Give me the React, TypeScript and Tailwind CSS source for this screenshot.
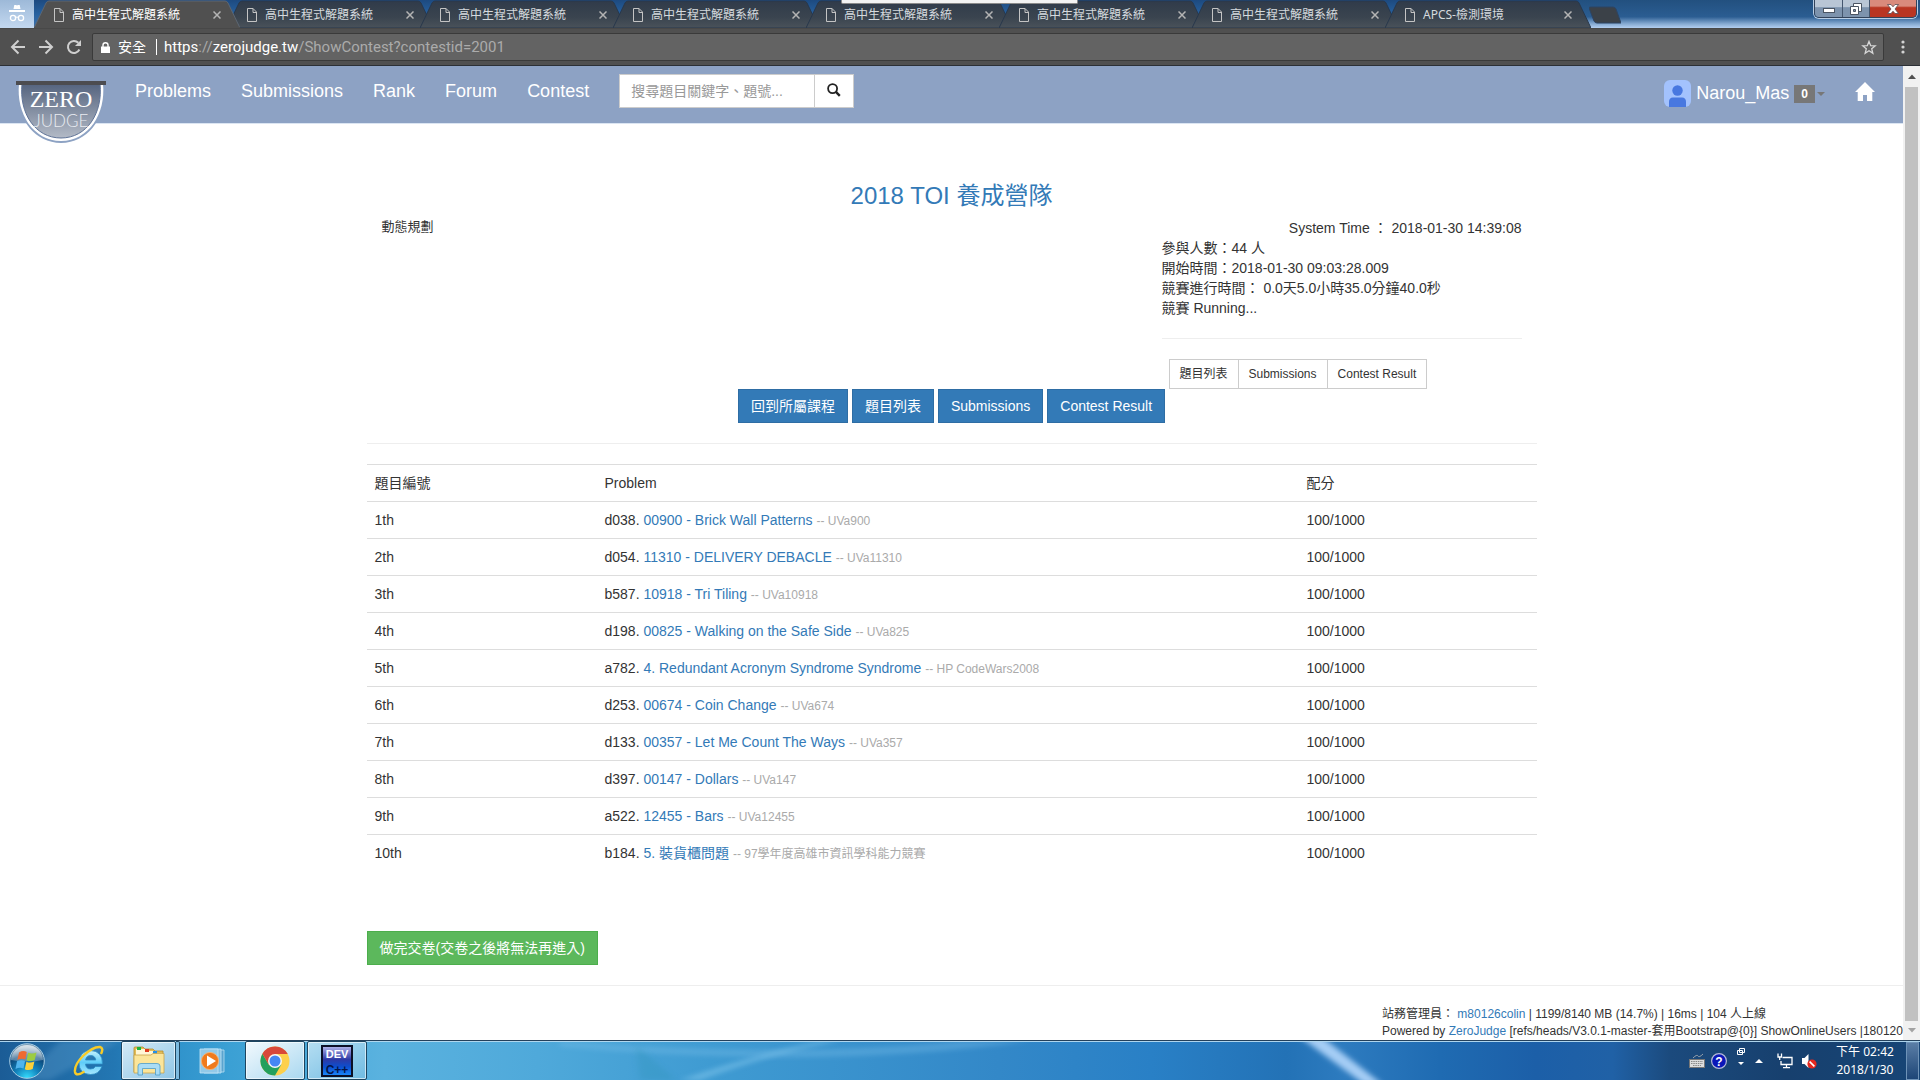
import React from "react";

const tabs = [
  "高中生程式解題系統",
  "高中生程式解題系統",
  "高中生程式解題系統",
  "高中生程式解題系統",
  "高中生程式解題系統",
  "高中生程式解題系統",
  "高中生程式解題系統",
  "APCS-檢測環境",
];

const problems = [
  { id: "d038", title: "00900 - Brick Wall Patterns", source: "UVa900" },
  { id: "d054", title: "11310 - DELIVERY DEBACLE", source: "UVa11310" },
  { id: "b587", title: "10918 - Tri Tiling", source: "UVa10918" },
  { id: "d198", title: "00825 - Walking on the Safe Side", source: "UVa825" },
  { id: "a782", title: "4. Redundant Acronym Syndrome Syndrome", source: "HP CodeWars2008" },
  { id: "d253", title: "00674 - Coin Change", source: "UVa674" },
  { id: "d133", title: "00357 - Let Me Count The Ways", source: "UVa357" },
  { id: "d397", title: "00147 - Dollars", source: "UVa147" },
  { id: "a522", title: "12455 - Bars", source: "UVa12455" },
  { id: "b184", title: "5. 裝貨櫃問題", source: "97學年度高雄市資訊學科能力競賽" },
];

function Tab({ label, active }: { label: string; active: boolean }) {
  return (
    <div
      className={
        "relative flex h-7 w-[206px] shrink-0 items-center pt-0.5 pl-5 pr-[19px] not-first:-ml-[13px] " +
        (active ? "z-10 text-white" : "text-[#d5dade]")
      }
    >
      <svg className="absolute inset-0 h-full w-full" viewBox="0 0 206 28" preserveAspectRatio="none" aria-hidden="true">
        <defs>
          <linearGradient id="tabShade" x1="0" y1="0" x2="0" y2="1">
            <stop offset="0" stopColor="#303b4a" />
            <stop offset="0.6" stopColor="#3a444f" />
            <stop offset="1" stopColor="#4a525a" />
          </linearGradient>
        </defs>
        <path
          d="M0 28 L12 3 Q13 1 15 1 L191 1 Q193 1 194 3 L206 28 Z"
          fill={active ? "#505050" : "url(#tabShade)"}
          stroke={active ? "#5c6673" : "#28384c"}
          strokeWidth="1"
        />
        {active && <path d="M0 28 H206" stroke="#505050" strokeWidth="2" />}
      </svg>
      <button className="relative flex grow items-center gap-2 text-left text-xs">
        <svg className="h-3.5 w-2.5 shrink-0" viewBox="0 0 10 14" fill="none" stroke="#c4c4c4" aria-hidden="true">
          <path d="M0.5 0.5 H6 L9.5 4 V13.5 H0.5 Z M6 0.5 V4.5 H9.5" />
        </svg>
        {label}
      </button>
      <button className="relative" aria-label="關閉分頁">
        <svg className="h-2 w-2" viewBox="0 0 8 8" stroke="#b4b4b4" strokeWidth="1.5" aria-hidden="true">
          <path d="M0.5 0.5 L7.5 7.5 M7.5 0.5 L0.5 7.5" />
        </svg>
      </button>
    </div>
  );
}

function TabStrip() {
  return (
    <div className="relative flex h-7 shrink-0 overflow-hidden bg-gradient-to-b from-[#1d4a80] via-[#27619f] to-[#3d71ab] font-['Noto_Sans','Noto_Sans_CJK_TC',sans-serif]">
      <div className="flex h-full w-[34px] shrink-0 justify-center bg-gradient-to-b from-[#9db9d8] to-[#c3d8f0] pt-1">
        <svg className="h-[18px] w-4" viewBox="0 0 16 18" fill="none" aria-hidden="true">
          <path d="M4.5 5 L5.3 1 H7 L8 1.5 L9 1 H10.7 L11.5 5 Z" fill="#fff" />
          <path d="M0 6 H16 V8 H0 Z" fill="#fff" />
          <circle cx="4" cy="14" r="2.6" stroke="#fff" strokeWidth="1.3" />
          <circle cx="12" cy="14" r="2.6" stroke="#fff" strokeWidth="1.3" />
          <path d="M6.6 13.5 Q8 12.5 9.4 13.5" stroke="#fff" />
        </svg>
      </div>
      <div className="flex">
        {tabs.map((t, i) => (
          <Tab key={i} label={t} active={i === 0} />
        ))}
      </div>
      <div className="-ml-3 flex h-full grow justify-between bg-[linear-gradient(180deg,#22507f_0%,#2b5d92_60%,#86aad2_85%,#b3cff0_100%)]">
        <button className="mt-1.5 ml-2.5 h-[18px] w-8" aria-label="新分頁">
          <svg className="h-full w-full" viewBox="0 0 32 18" aria-hidden="true">
            <path d="M0 2 Q0 1 1.5 1 H24 Q26 1 27 3 L32 17 H8 Q6 17 5 15 Z" fill="#3b4148" stroke="#2d4463" />
          </svg>
        </button>
        <div className="mr-[3px] flex h-[18px] overflow-hidden rounded-b-[5px] border border-t-0 border-[#33435a] shadow-[0_0_0_1px_#b8cde4]">
          <button className="flex w-7 items-center justify-center border-r border-[#44566e] bg-gradient-to-b from-[#b9c6d5] from-40% to-[#7d93ad] to-45%" aria-label="最小化">
            <svg className="mt-1 h-[5px] w-3" viewBox="0 0 12 5" aria-hidden="true">
              <rect x="0.5" y="0.5" width="11" height="4" fill="#fff" stroke="#4b5563" />
            </svg>
          </button>
          <button className="flex w-[27px] items-center justify-center border-r border-[#44566e] bg-gradient-to-b from-[#b9c6d5] from-40% to-[#7d93ad] to-45%" aria-label="還原">
            <svg className="h-3 w-3" viewBox="0 0 12 12" fill="#fff" stroke="#4b5563" aria-hidden="true">
              <path d="M3.5 0.5 H11.5 V8.5 H3.5 Z" />
              <path d="M0.5 3.5 H8.5 V11.5 H0.5 Z" />
              <path d="M3.5 6.5 H5.5 V8.5 H3.5 Z" fill="#8295ad" />
            </svg>
          </button>
          <button className="flex w-[46px] items-center justify-center bg-gradient-to-b from-[#d98a7c] from-35% to-[#b93522] to-45%" aria-label="關閉">
            <svg className="h-2.5 w-3" viewBox="0 0 12 10" aria-hidden="true">
              <path d="M0.5 0.5 H4 L6 2.8 L8 0.5 H11.5 L8 5 L11.5 9.5 H8 L6 7.2 L4 9.5 H0.5 L4 5 Z" fill="#fff" stroke="#5b4a52" strokeWidth="0.8" />
            </svg>
          </button>
        </div>
      </div>
      <div className="absolute top-0 left-[841px] z-20 h-1 w-[237px] rounded-b-xs border border-t-0 border-[#8a8a8a] bg-[#f3f3f3]" />
    </div>
  );
}

function Toolbar() {
  return (
    <div className="flex h-[38px] shrink-0 items-center border-t border-b border-t-[#484848] border-b-[#2c3036] bg-[#505050] pr-3.5 pl-2.5 font-['Noto_Sans','Noto_Sans_CJK_TC',sans-serif]">
      <div className="flex items-center gap-3 pr-2.5 text-[#cfcfcf]">
        <button aria-label="上一頁">
          <svg className="h-4 w-4" viewBox="0 0 16 16" fill="none" stroke="currentColor" strokeWidth="2" aria-hidden="true">
            <path d="M15 8 H2.5 M8.5 1.5 L2 8 L8.5 14.5" />
          </svg>
        </button>
        <button aria-label="下一頁">
          <svg className="h-4 w-4" viewBox="0 0 16 16" fill="none" stroke="currentColor" strokeWidth="2" aria-hidden="true">
            <path d="M1 8 H13.5 M7.5 1.5 L14 8 L7.5 14.5" />
          </svg>
        </button>
        <button aria-label="重新載入">
          <svg className="h-4 w-4" viewBox="0 0 16 16" fill="none" stroke="currentColor" strokeWidth="2" aria-hidden="true">
            <path d="M13.4 10.5 A6 6 0 1 1 12.3 3.8" />
            <path d="M15 1 V7 H9 Z" fill="currentColor" stroke="none" />
          </svg>
        </button>
      </div>
      <div className="flex h-7 grow items-center rounded-xs border border-[#3a3a3a] bg-[#636363] pr-1.5 pl-2">
        <svg className="h-[11px] w-[9px]" viewBox="0 0 9 11" aria-hidden="true">
          <path d="M0 4.5 H9 V11 H0 Z" fill="#fff" />
          <path d="M2 5 V3 Q2 0.8 4.5 0.8 Q7 0.8 7 3 V5" fill="none" stroke="#fff" strokeWidth="1.4" />
        </svg>
        <span className="ml-2 text-sm text-white">安全</span>
        <span className="mr-[7px] ml-2.5 h-4 w-px bg-white" />
        <div className="grow font-[Roboto,sans-serif] text-[15px] whitespace-nowrap text-[#ababab]">
          <span className="text-white">https</span>://<span className="text-white">zerojudge.tw</span>/ShowContest?contestid=2001
        </div>
        <button aria-label="加入書籤">
          <svg className="h-[15px] w-4" viewBox="0 0 16 16" fill="none" stroke="#d8d8d8" strokeWidth="1.4" aria-hidden="true">
            <path d="M8 1.5 L9.8 6 L14.6 6.3 L10.9 9.4 L12.1 14.2 L8 11.5 L3.9 14.2 L5.1 9.4 L1.4 6.3 L6.2 6 Z" />
          </svg>
        </button>
      </div>
      <button className="ml-4" aria-label="選單">
        <svg className="h-3.5 w-1.5" viewBox="0 0 6 14" fill="#d4d4d4" aria-hidden="true">
          <circle cx="3" cy="2" r="1.6" />
          <circle cx="3" cy="7" r="1.6" />
          <circle cx="3" cy="12" r="1.6" />
        </svg>
      </button>
    </div>
  );
}

function Logo() {
  return (
    <svg className="h-[62px] w-[90px]" viewBox="0 0 90 62" role="img" aria-label="ZeroJudge">
      <defs>
        <linearGradient id="shield" x1="0" y1="0" x2="0" y2="1">
          <stop offset="0" stopColor="#55647f" />
          <stop offset="1" stopColor="#b3bac6" />
        </linearGradient>
      </defs>
      <path d="M2 3 C-2 33 16 62 45 62 C74 62 92 33 88 3 Z" fill="#8da2c3" />
      <path d="M3 3 C0 32 17 60 45 60 C73 60 90 32 87 3 Z" fill="#fff" />
      <path d="M6 3 C3 32 19 57 45 57 C71 57 87 32 84 3 Z" fill="url(#shield)" stroke="#5f7397" strokeWidth="1" />
      <rect x="0" y="0" width="90" height="4" fill="#4c4c50" />
      <text x="45" y="26" textAnchor="middle" fontSize="24" fill="#fff" fontFamily="Liberation Serif, serif">ZERO</text>
      <text x="45" y="46" textAnchor="middle" fontSize="17" fontWeight="300" fill="#e9ecf1" fontFamily="Lato, sans-serif">JUDGE</text>
    </svg>
  );
}

function NavBar() {
  return (
    <nav className="flex h-[58px] items-start border-b border-[#dbe5f2] bg-[#8da2c4] pl-4 text-lg leading-5 text-white">
      <a href="#" className="z-10 mt-[15px] mr-3.5 h-[62px] shrink-0">
        <Logo />
      </a>
      <div className="flex pt-[15px]">
        {["Problems", "Submissions", "Rank", "Forum", "Contest"].map((l) => (
          <a key={l} href="#" className="px-[15px]">
            {l}
          </a>
        ))}
      </div>
      <form className="mt-2 ml-[15px] flex">
        <input
          aria-label="搜尋"
          placeholder="搜尋題目關鍵字、題號..."
          className="h-[34px] w-[196px] border border-[#ccc] bg-white px-[11px] text-sm text-[#555] placeholder:text-[#999]"
        />
        <button type="button" aria-label="搜尋" className="-ml-px flex h-[34px] w-10 items-center justify-center border border-[#ccc] bg-white pb-0.5">
          <svg className="h-3.5 w-3.5" viewBox="0 0 14 14" fill="none" stroke="#222" aria-hidden="true">
            <circle cx="5.6" cy="5.6" r="4.5" strokeWidth="1.8" />
            <path d="M8.9 8.9 L12.8 12.8" strokeWidth="2.4" />
          </svg>
        </button>
      </form>
      <div className="mr-7 ml-auto flex items-start pt-3.5">
        <a href="#" className="flex items-center">
          <svg className="h-[27px] w-[27px]" viewBox="0 0 27 27" aria-hidden="true">
            <rect width="27" height="27" rx="6" fill="#a3c2fd" />
            <circle cx="13.5" cy="10.5" r="5.2" fill="#4878e0" />
            <path d="M5 27 V22 Q5 17.5 9 17.5 H18 Q22 17.5 22 22 V27 Z" fill="#4878e0" />
          </svg>
          <span className="ml-[5px] pb-0.5">Narou_Mas</span>
          <span className="ml-[5px] bg-[#777] px-[7px] text-xs leading-[18px] font-bold">0</span>
          <svg className="ml-0.5 h-1 w-2" viewBox="0 0 8 4" fill="#777" aria-hidden="true">
            <path d="M0 0 H8 L4 4 Z" />
          </svg>
        </a>
        <a href="#" aria-label="首頁" className="mt-0.5 ml-[30px]">
          <svg className="h-[19px] w-5" viewBox="0 0 20 19" fill="#fff" aria-hidden="true">
            <path d="M10 0 L20 10 H17.3 V19 H12 V13 H8 V19 H2.7 V10 H0 Z" />
          </svg>
        </a>
      </div>
    </nav>
  );
}

function Contest() {
  const small = "-ml-px border border-[#ccc] bg-white px-2.5 py-[5px] text-xs leading-[18px] first:ml-0";
  const blue = "border border-[#2e6da4] bg-[#337ab7] px-3 py-1.5 text-white";
  const cell = "border-t border-[#ddd] p-2 text-left font-normal";
  return (
    <main className="mx-auto max-w-[1170px] pt-[59px]">
      <h3 className="mb-[9px] text-center text-2xl leading-[26px] text-[#337ab7]">
        <a href="#">2018 TOI 養成營隊</a>
      </h3>
      <div className="flex justify-between px-[15px]">
        <p className="text-[13px] leading-[18px]">動態規劃</p>
        <div className="w-[360px]">
          <p className="text-right">System Time ： 2018-01-30 14:39:08</p>
          <p>參與人數：44 人</p>
          <p>開始時間：2018-01-30 09:03:28.009</p>
          <p>競賽進行時間： 0.0天5.0小時35.0分鐘40.0秒</p>
          <p>競賽 Running...</p>
          <hr className="my-5 border-[#eee]" />
          <div className="flex pl-[7px]">
            <button className={small}>題目列表</button>
            <button className={small}>Submissions</button>
            <button className={small}>Contest Result</button>
          </div>
        </div>
      </div>
      <div className="flex justify-center gap-1">
        <button className={blue}>回到所屬課程</button>
        <button className={blue}>題目列表</button>
        <button className={blue}>Submissions</button>
        <button className={blue}>Contest Result</button>
      </div>
      <hr className="my-5 border-[#eee]" />
      <table className="w-full table-fixed border-collapse">
        <colgroup>
          <col className="w-[230px]" />
          <col />
          <col className="w-[238px]" />
        </colgroup>
        <thead>
          <tr>
            <th className={cell}>題目編號</th>
            <th className={cell}>Problem</th>
            <th className={cell}>配分</th>
          </tr>
        </thead>
        <tbody>
          {problems.map((p, i) => (
            <tr key={p.id}>
              <td className={cell}>{i + 1}th</td>
              <td className={cell}>
                {p.id}.{" "}
                <a href="#" className="text-[#337ab7]">
                  {p.title}
                </a>{" "}
                <span className="text-xs text-[#aaa]">-- {p.source}</span>
              </td>
              <td className={cell}>100/1000</td>
            </tr>
          ))}
        </tbody>
      </table>
      <button className="mt-[60px] border border-[#4cae4c] bg-[#5cb85c] px-3 py-1.5 text-white">做完交卷(交卷之後將無法再進入)</button>
    </main>
  );
}

function Footer() {
  return (
    <footer className="mt-5 border-t border-[#eee] pt-5">
      <div className="ml-auto w-[521px] overflow-hidden text-xs leading-[17px] whitespace-nowrap">
        <p>
          站務管理員：{" "}
          <a href="#" className="text-[#337ab7]">
            m80126colin
          </a>{" "}
          | 1199/8140 MB (14.7%) | 16ms | 104 人上線
        </p>
        <p>
          Powered by{" "}
          <a href="#" className="text-[#337ab7]">
            ZeroJudge
          </a>{" "}
          [refs/heads/V3.0.1-master-套用Bootstrap@&#123;0&#125;] ShowOnlineUsers |180120
        </p>
      </div>
    </footer>
  );
}

function Scrollbar() {
  return (
    <div className="flex w-[17px] shrink-0 flex-col items-center bg-[#f1f1f1]" aria-hidden="true">
      <svg className="my-2 h-[5px] w-2" viewBox="0 0 8 5" fill="#505050">
        <path d="M0 5 L4 0.5 L8 5 Z" />
      </svg>
      <div className="w-[13px] grow bg-[#c1c1c1]" />
      <svg className="my-[7px] h-[5px] w-2" viewBox="0 0 8 5" fill="#a3a3a3">
        <path d="M0 0 L4 4.5 L8 0 Z" />
      </svg>
    </div>
  );
}

function StartIcon() {
  return (
    <svg className="h-9 w-9" viewBox="0 0 36 36" aria-hidden="true">
      <defs>
        <radialGradient id="orb" cx="0.5" cy="1" r="0.9">
          <stop offset="0" stopColor="#35e0ff" />
          <stop offset="0.4" stopColor="#1283bd" />
          <stop offset="0.75" stopColor="#0c4a7d" />
          <stop offset="1" stopColor="#6f93ad" />
        </radialGradient>
        <linearGradient id="gloss" x1="0" y1="0" x2="0" y2="1">
          <stop offset="0" stopColor="#fff" stopOpacity="0.75" />
          <stop offset="1" stopColor="#fff" stopOpacity="0.25" />
        </linearGradient>
      </defs>
      <circle cx="18" cy="18" r="17.3" fill="url(#orb)" stroke="#a7cde4" strokeWidth="1" />
      <path d="M2 17 A16 15 0 0 1 34 17 Q18 20 2 17 Z" fill="url(#gloss)" />
      <path d="M10 9.5 Q14 7 17.8 9 L16.3 16.5 Q12.5 14.8 8.3 17 Z" fill="#ee6a31" />
      <path d="M19.2 9.7 Q23 11.5 27.5 9.4 L25.7 17 Q21.5 19 17.6 17.2 Z" fill="#9ccc42" />
      <path d="M8 18.3 Q12 16.3 16 18 L14.5 25.5 Q10.5 24 6.5 26 Z" fill="#4fb4ee" />
      <path d="M17.4 18.7 Q21 20.5 25.4 18.5 L23.7 26 Q19.5 28 15.8 26.2 Z" fill="#fbd03a" />
    </svg>
  );
}

function IeIcon() {
  return (
    <svg className="h-8 w-8" viewBox="0 0 32 32" fill="none" aria-hidden="true">
      <defs>
        <linearGradient id="ie" x1="0" y1="0" x2="0" y2="1">
          <stop offset="0" stopColor="#c5f2ff" />
          <stop offset="0.5" stopColor="#5fcdf8" />
          <stop offset="1" stopColor="#a5e7ff" />
        </linearGradient>
      </defs>
      <path
        d="M29.5 19 H12.5 Q13 24 17.5 24 Q21 24 22.5 21.5 H29 Q26 29.5 17.5 29.5 Q6 29 6 17.5 Q6.5 6 17.5 5.5 Q29.5 6 29.5 19 Z M12.6 15 H22.8 Q22 10.5 17.7 10.5 Q13.3 10.5 12.6 15 Z"
        fill="url(#ie)"
        fillRule="evenodd"
        stroke="#2b8cc4"
        strokeWidth="0.8"
      />
      <path d="M11.5 26.5 Q3 32 2 27 Q1 20 10 11 Q20 1.5 27 2 Q31 3 28 9" stroke="#f7cb28" strokeWidth="2.4" />
    </svg>
  );
}

function ExplorerIcon() {
  return (
    <svg className="h-[30px] w-8" viewBox="0 0 32 30" aria-hidden="true">
      <path d="M1 2 Q1 1 2 1 H10 L12 3 H20 L22 5 H30 V26 H1 Z" fill="#e3bd57" stroke="#b58d2f" strokeWidth="0.8" />
      <path d="M3 3 H12 L14 5 H21 L23 7 H29 V10 H3 Z" fill="#fff6d5" />
      <path d="M4 1 H8 V4 H4 Z" fill="#1db53a" />
      <path d="M12 3 H16 V6 H12 Z" fill="#df3a1e" />
      <path d="M20 5 H24 V8 H20 Z" fill="#2390e8" />
      <path d="M1 9 H18 L20 7.5 H31 V27 H1 Z" fill="#fbe59a" stroke="#c9a349" strokeWidth="0.8" />
      <path d="M5 29 V20 Q5 17.5 8 17.5 H24 Q27 17.5 27 20 V29 H22.5 V22.5 H9.5 V29 Z" fill="#a9dcf5" stroke="#4c9cc8" strokeWidth="0.8" />
    </svg>
  );
}

function MediaIcon() {
  return (
    <svg className="h-7 w-7" viewBox="0 0 28 28" aria-hidden="true">
      <path d="M9 3 H25 V25 H9 Z" fill="#5aa4cf" stroke="#b8e0f4" strokeWidth="0.8" />
      <path d="M5 2 H22 V26 H5 Z" fill="#7fbee2" stroke="#c4e6f7" strokeWidth="0.8" />
      <path d="M1 2 H19 V26 H1 Z" fill="#92c9e8" stroke="#c4e6f7" strokeWidth="0.8" />
      <circle cx="11" cy="14" r="8.6" fill="#ef7a1d" stroke="#ffb36b" strokeWidth="0.8" />
      <path d="M8 8.5 L17 14 L8 19.5 Z" fill="#fff" />
    </svg>
  );
}

function ChromeIcon() {
  return (
    <svg className="h-[30px] w-[30px]" viewBox="0 0 30 30" aria-hidden="true">
      <circle cx="15" cy="15" r="14.5" fill="#fdd04c" />
      <path d="M2.44 7.75 A14.5 14.5 0 0 0 15 29.5 L21.3 18.6 L15 15 L8.7 18.6 Z" fill="#23a05d" />
      <path d="M15 8 H27.7 A14.5 14.5 0 0 0 2.44 7.75 L8.7 18.6 L15 15 Z" fill="#d8483a" />
      <circle cx="15" cy="15" r="7" fill="#f6f6f6" />
      <circle cx="15" cy="15" r="5.5" fill="#4587f3" />
    </svg>
  );
}

function DevIcon() {
  return (
    <svg className="h-8 w-8" viewBox="0 0 32 32" aria-hidden="true">
      <defs>
        <linearGradient id="dev" x1="0" y1="0" x2="0" y2="1">
          <stop offset="0" stopColor="#b5b9ee" />
          <stop offset="0.45" stopColor="#2d3aa6" />
          <stop offset="0.7" stopColor="#0b4fd0" />
          <stop offset="1" stopColor="#1b8dff" />
        </linearGradient>
      </defs>
      <rect x="1" y="1" width="30" height="30" fill="url(#dev)" stroke="#0b1026" strokeWidth="2" />
      <text x="16" y="13" textAnchor="middle" fontSize="11" fontWeight="700" fill="#fff" fontFamily="Liberation Sans, sans-serif">DEV</text>
      <text x="16" y="29" textAnchor="middle" fontSize="12" fontWeight="700" fill="#04144a" fontFamily="Liberation Sans, sans-serif">C++</text>
    </svg>
  );
}

function TaskBar() {
  const task =
    "flex h-[39px] items-center justify-center rounded-xs border border-[#1d4560] shadow-[inset_0_0_0_1px_rgba(255,255,255,0.6)]";
  return (
    <div className="relative flex h-10 shrink-0 items-center overflow-hidden border-t border-[#24415c] bg-[linear-gradient(90deg,#1b5c96_0%,#2377b3_6%,#2f92cb_9%,#3ba0d4_12%,#5ab2df_20%,#4fa9da_28%,#3f9bd2_37%,#3388c8_52%,#2980c6_60%,#2372b6_67%,#2d7bbf_70%,#1f6bb2_75%,#1c5fa8_80%,#2061a6_84%,#1b4a7d_87%,#17406e_93%,#174576_100%)]">
      <svg className="absolute inset-0 h-full w-full" viewBox="0 0 1920 40" preserveAspectRatio="none" aria-hidden="true">
        <defs>
          <filter id="soft" x="-20%" y="-20%" width="140%" height="140%">
            <feGaussianBlur stdDeviation="3" />
          </filter>
        </defs>
        <path d="M1300 -4 L1322 -4 L1382 44 L1364 44 Z" fill="#a5cdf5" filter="url(#soft)" />
        <path d="M700 40 Q780 10 840 0 L820 0 Q750 15 680 40 Z" fill="#8accf0" opacity="0.5" filter="url(#soft)" />
        <path d="M560 6 Q820 30 1030 0 L960 0 Q800 18 560 0 Z" fill="#7cc0ea" opacity="0.35" filter="url(#soft)" />
        <path d="M60 0 L20 40 H50 L120 0 Z" fill="#6aa9d6" opacity="0.3" filter="url(#soft)" />
        <path d="M636 4 L676 40 H640 Z" fill="#2f93b8" opacity="0.3" filter="url(#soft)" />
        <path d="M0 0.5 H1920" stroke="#b3d8f0" />
      </svg>
      <div className="relative flex w-full items-center pl-[9px]">
        <button aria-label="開始" className="w-9">
          <StartIcon />
        </button>
        <button aria-label="Internet Explorer" className="ml-7 w-8">
          <IeIcon />
        </button>
        <div className="ml-4 flex">
          <button aria-label="檔案總管" className={task + " w-[55px] bg-gradient-to-br from-[#d3e9f5] to-[#8fc6e6]"}>
            <ExplorerIcon />
          </button>
          <span className="h-[39px] w-1 rounded-r-xs border border-l-0 border-[#1d4560] bg-[#7dbbe0]" />
        </div>
        <button aria-label="Media Player" className="ml-[19px] w-7">
          <MediaIcon />
        </button>
        <button aria-label="Google Chrome" className={task + " ml-[18px] w-[60px] bg-gradient-to-br from-[#f2f9fd] to-[#a9d8f0]"}>
          <ChromeIcon />
        </button>
        <button aria-label="Dev-C++" className={task + " ml-0.5 w-[60px] bg-gradient-to-br from-[#b5def2] to-[#6fbbe2]"}>
          <DevIcon />
        </button>
        <div className="ml-auto flex items-center font-['Noto_Sans','Noto_Sans_CJK_TC',sans-serif] text-xs text-white">
          <svg className="h-4 w-4" viewBox="0 0 16 16" aria-hidden="true">
            <path d="M4 5 Q8 1 9 3 T14 1" fill="none" stroke="#9aa3ad" />
            <rect x="0.5" y="6.5" width="15" height="8" fill="#ddd" stroke="#777" />
            <path d="M2 8.5 H14 M2 10.5 H14 M4 12.5 H12" stroke="#888" strokeDasharray="1.5 0.8" />
          </svg>
          <svg className="ml-1.5 h-4 w-4" viewBox="0 0 16 16" aria-hidden="true">
            <circle cx="8" cy="8" r="7.4" fill="#0a16b8" stroke="#b5b9d8" strokeWidth="1.2" />
            <text x="8" y="12.5" textAnchor="middle" fontSize="12" fontWeight="700" fill="#fff" fontFamily="Liberation Sans, sans-serif">?</text>
          </svg>
          <svg className="mb-2 ml-2.5 h-[18px] w-2" viewBox="0 0 8 18" fill="none" stroke="#fff" aria-hidden="true">
            <path d="M2.5 0.5 H7.5 V4.5 H2.5 Z M0.5 2.5 H5.5 V6.5 H0.5 Z" />
            <path d="M1 14 H7 L4 17 Z" fill="#fff" stroke="none" />
          </svg>
          <svg className="ml-2.5 h-1 w-2" viewBox="0 0 8 4" fill="#fff" aria-hidden="true">
            <path d="M0 4 L4 0 L8 4 Z" />
          </svg>
          <svg className="ml-3.5 h-4 w-4" viewBox="0 0 16 16" fill="none" stroke="#fff" strokeWidth="1.3" aria-hidden="true">
            <path d="M5.5 4.5 H15 V11.5 H4 V8 M9.5 12 V14.5 M6 14.7 H13" />
            <path d="M1 0.5 V4 H4.5 V0.5 M2.7 4 V7" />
          </svg>
          <svg className="ml-2 h-4 w-4" viewBox="0 0 16 16" aria-hidden="true">
            <path d="M1 5 H3.5 L7.5 1 V15 L3.5 11 H1 Z" fill="#fff" />
            <circle cx="11" cy="11" r="4.6" fill="#e5281e" />
            <path d="M8.6 8.6 L13.4 13.4" stroke="#fff" strokeWidth="1.6" />
          </svg>
          <div className="ml-[15px] w-[66px] text-center leading-[18px]">
            <p>下午 02:42</p>
            <p>2018/1/30</p>
          </div>
          <button aria-label="顯示桌面" className="mr-px ml-2 h-[38px] w-[13px] border border-[#6e93b8] bg-gradient-to-b from-[#5a7ea6] to-[#1d4677]" />
        </div>
      </div>
    </div>
  );
}

export default function App() {
  return (
    <div lang="zh-Hant" className="flex h-screen flex-col overflow-hidden bg-white">
      <TabStrip />
      <Toolbar />
      <div className="flex min-h-0 grow">
        <div className="min-w-0 grow overflow-hidden font-['Liberation_Sans','Noto_Sans_CJK_TC',sans-serif] text-sm leading-5 text-[#333]">
          <NavBar />
          <Contest />
          <Footer />
        </div>
        <Scrollbar />
      </div>
      <TaskBar />
    </div>
  );
}
